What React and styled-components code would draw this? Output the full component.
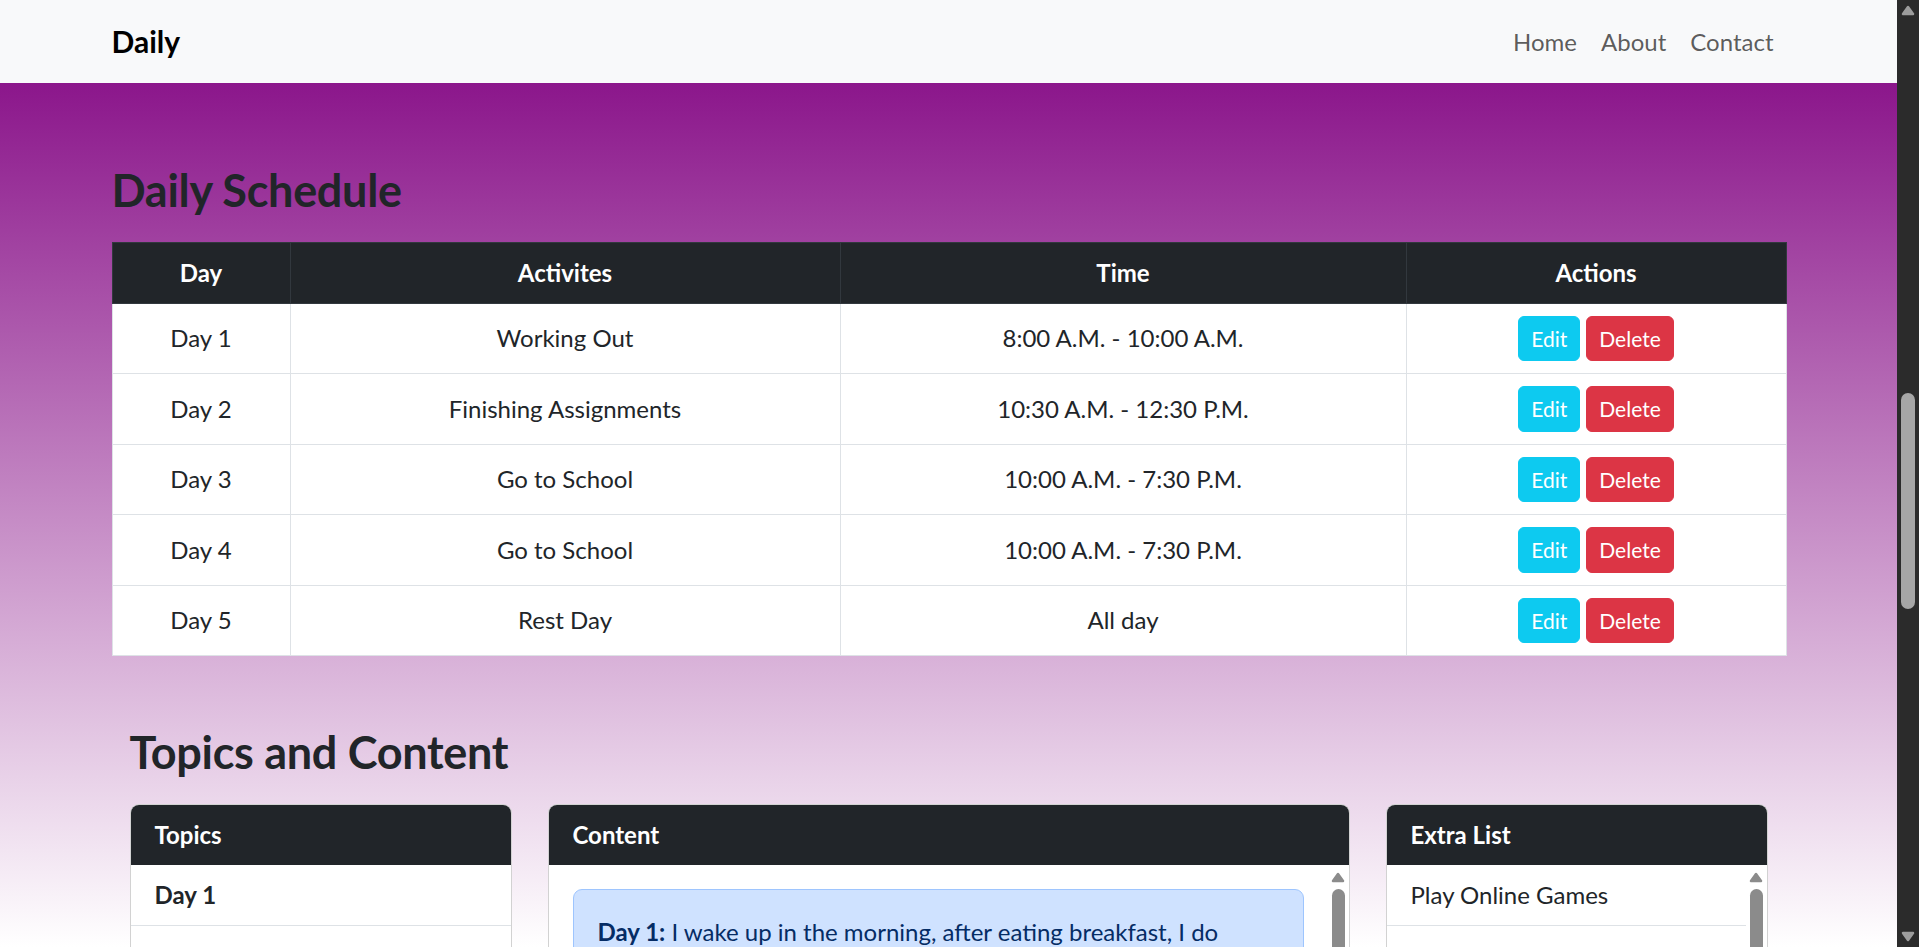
import styled, { createGlobalStyle } from "styled-components";

const FONT = `Lato, "Open Sans", sans-serif`;

const GlobalStyle = createGlobalStyle`
  html {
    background: linear-gradient(to bottom, #800080, #ffffff) fixed;
  }

  body {
    margin: 0;
    font-family: ${FONT};
    font-size: 24px;
    line-height: 1.5;
    color: #212529;
  }
`;

// the window's scroll rail, drawn since the page is photographed without one
const Page = styled.div`
  margin-right: 22px;
`;

const Rail = styled.div`
  width: ${(p) => (p.$dark ? 22 : 21)}px;
  flex: 0 0 auto;
  display: flex;
  flex-direction: column;
  align-items: center;
  padding: ${(p) => (p.$dark ? "5px 0" : "7px 0")};
  box-sizing: border-box;
  background: ${(p) => (p.$dark ? "#2b2b2b" : "#ffffff")};
  color: ${(p) => (p.$dark ? "#9d9d9d" : "#8b8b8b")};
`;

const WindowRail = styled(Rail)`
  position: fixed;
  top: 0;
  right: 0;
  height: 100vh;
`;

const Thumb = styled.div`
  width: ${(p) => (p.$dark ? 14 : 13)}px;
  height: ${(p) => p.$h}px;
  margin-top: ${(p) => p.$top}px;
  border-radius: 7px;
  background: ${(p) => (p.$dark ? "#a6a6a6" : "#8b8b8b")};
`;

const BottomArrow = styled.svg`
  margin-top: auto;
`;

const Arrow = ({ down, bottom }) => {
  const Svg = bottom ? BottomArrow : "svg";
  return (
    <Svg width="14" height="11" viewBox="0 0 14 11">
      <polygon
        points={down ? "2,2 12,2 7,9" : "2,9 12,9 7,2"}
        fill="currentColor"
        stroke="currentColor"
        strokeWidth="2.5"
        strokeLinejoin="round"
      />
    </Svg>
  );
};

const Navbar = styled.nav`
  background: #f8f9fa;
  height: 83px;
  display: flex;
  align-items: center;
`;

const Container = styled.div`
  width: 100%;
  max-width: 1710px;
  margin: 0 auto;
  padding: 0 18px;
  box-sizing: border-box;
`;

const NavInner = styled(Container)`
  display: flex;
  align-items: center;
  justify-content: space-between;
`;

const Brand = styled.a`
  font-size: 30px;
  line-height: 45px;
  font-weight: 700;
  color: #000;
  text-decoration: none;
`;

const NavLinks = styled.ul`
  display: flex;
  list-style: none;
  margin: 0;
  padding: 0;
`;

const NavLink = styled.a`
  display: block;
  padding: 12px;
  line-height: 36px;
  color: rgba(0, 0, 0, 0.65);
  text-decoration: none;
`;

const Main = styled.main`
  padding-top: 79px;
  padding-bottom: 72px;
`;

const SectionTitle = styled.h2`
  margin: 0 0 22px;
  font-size: 45px;
  line-height: 57.6px;
  font-weight: 700;
  letter-spacing: -0.3px;
  color: #212529;
`;

const Table = styled.table`
  width: 100%;
  border-collapse: collapse;
  background: #ffffff;
  text-align: center;
  table-layout: fixed;
`;

const Th = styled.th`
  width: ${(p) => p.$w}px;
  box-sizing: border-box;
  padding: 12px;
  line-height: 36px;
  font-weight: 700;
  color: #ffffff;
  background: #212529;
  border: 1px solid #32383e;
`;

const Td = styled.td`
  padding: 12px;
  line-height: 36px;
  vertical-align: middle;
  border: 1px solid #dee2e6;
`;

const Actions = styled.div`
  display: flex;
  justify-content: center;
  gap: 6px;
`;

const Button = styled.button`
  font-family: ${FONT};
  font-size: 21px;
  line-height: 31.5px;
  padding: 6px 12px;
  border-radius: 6px;
  border: 1px solid ${(p) => (p.$variant === "danger" ? "#dc3545" : "#0dcaf0")};
  background: ${(p) => (p.$variant === "danger" ? "#dc3545" : "#0dcaf0")};
  color: #ffffff;
  cursor: pointer;
`;

const TopicsSection = styled.section`
  margin-top: 68px;
  padding: 0 18px;
`;

const CardGrid = styled.div`
  display: grid;
  grid-template-columns: 382px 1fr 382px;
  gap: 36px;
  align-items: start;
`;

const Card = styled.div`
  background: #ffffff;
  border: 1px solid rgba(0, 0, 0, 0.175);
  border-radius: 9px;
  overflow: hidden;
`;

const CardHeader = styled.div`
  background: #212529;
  color: #ffffff;
  padding: 12px 24px;
  line-height: 36px;
  font-weight: 700;
`;

const ScrollBox = styled.div`
  display: flex;
  max-height: ${(p) => p.$max}px;
`;

const ScrollArea = styled.div`
  flex: 1;
  min-width: 0;
  overflow-y: auto;
  scrollbar-width: none;
  padding: ${(p) => (p.$pad ? "24px" : "0")};
`;

const List = styled.ul`
  list-style: none;
  margin: 0;
  padding: 0;
`;

const ListItem = styled.li`
  padding: 12px 24px;
  line-height: 36px;
  font-weight: ${(p) => (p.$bold ? 700 : 400)};
  border-bottom: 1px solid #dee2e6;

  &:last-child {
    border-bottom: none;
  }
`;

const Alert = styled.div`
  background: #cfe2ff;
  border: 1px solid #9ec5fe;
  border-radius: 9px;
  color: #052c65;
  padding: 24px;
  margin-bottom: 24px;

  &:last-child {
    margin-bottom: 0;
  }

  p {
    margin: 0;
  }
`;

const schedule = [
  { day: "Day 1", activity: "Working Out", time: "8:00 A.M. - 10:00 A.M." },
  { day: "Day 2", activity: "Finishing Assignments", time: "10:30 A.M. - 12:30 P.M." },
  { day: "Day 3", activity: "Go to School", time: "10:00 A.M. - 7:30 P.M." },
  { day: "Day 4", activity: "Go to School", time: "10:00 A.M. - 7:30 P.M." },
  { day: "Day 5", activity: "Rest Day", time: "All day" },
];

const notes = [
  "I wake up in the morning, after eating breakfast, I do stretching and then my workout routine for two hours.",
  "I spend the late morning finishing my assignments before lunch.",
  "I go to school and attend my classes until the evening.",
  "Another full day at school, then I review my notes at night.",
  "I rest the whole day and get ready for the next week.",
];

const extras = [
  "Play Online Games",
  "Read a Book",
  "Watch a Movie",
  "Go for a Walk",
  "Listen to Music",
  "Clean My Room",
  "Call Friends",
];

export default function App() {
  return (
    <>
      <GlobalStyle />
      <Page>
        <Navbar>
          <NavInner>
            <Brand href="#">Daily</Brand>
            <NavLinks>
              <li><NavLink href="#">Home</NavLink></li>
              <li><NavLink href="#">About</NavLink></li>
              <li><NavLink href="#">Contact</NavLink></li>
            </NavLinks>
          </NavInner>
        </Navbar>

        <Main>
          <Container>
            <SectionTitle>Daily Schedule</SectionTitle>
            <Table>
              <thead>
                <tr>
                  <Th $w={178}>Day</Th>
                  <Th $w={550}>Activites</Th>
                  <Th $w={566}>Time</Th>
                  <Th $w={380}>Actions</Th>
                </tr>
              </thead>
              <tbody>
                {schedule.map((row) => (
                  <tr key={row.day}>
                    <Td>{row.day}</Td>
                    <Td>{row.activity}</Td>
                    <Td>{row.time}</Td>
                    <Td>
                      <Actions>
                        <Button $variant="info">Edit</Button>
                        <Button $variant="danger">Delete</Button>
                      </Actions>
                    </Td>
                  </tr>
                ))}
              </tbody>
            </Table>

            <TopicsSection>
              <SectionTitle>Topics and Content</SectionTitle>
              <CardGrid>
                <Card>
                  <CardHeader>Topics</CardHeader>
                  <List>
                    {schedule.map((row) => (
                      <ListItem key={row.day} $bold>{row.day}</ListItem>
                    ))}
                  </List>
                </Card>

                <Card>
                  <CardHeader>Content</CardHeader>
                  <ScrollBox $max={440}>
                    <ScrollArea $pad>
                      {notes.map((text, i) => (
                        <Alert key={i}>
                          <p>
                            <strong>Day {i + 1}:</strong> {text}
                          </p>
                        </Alert>
                      ))}
                    </ScrollArea>
                    <Rail>
                      <Arrow />
                      <Thumb $top={6} $h={180} />
                      <Arrow down bottom />
                    </Rail>
                  </ScrollBox>
                </Card>

                <Card>
                  <CardHeader>Extra List</CardHeader>
                  <ScrollBox $max={366}>
                    <ScrollArea>
                      <List>
                        {extras.map((item) => (
                          <ListItem key={item}>{item}</ListItem>
                        ))}
                      </List>
                    </ScrollArea>
                    <Rail>
                      <Arrow />
                      <Thumb $top={6} $h={200} />
                      <Arrow down bottom />
                    </Rail>
                  </ScrollBox>
                </Card>
              </CardGrid>
            </TopicsSection>
          </Container>
        </Main>
      </Page>

      <WindowRail $dark>
        <Arrow />
        <Thumb $dark $top={377} $h={216} />
        <Arrow down bottom />
      </WindowRail>
    </>
  );
}
